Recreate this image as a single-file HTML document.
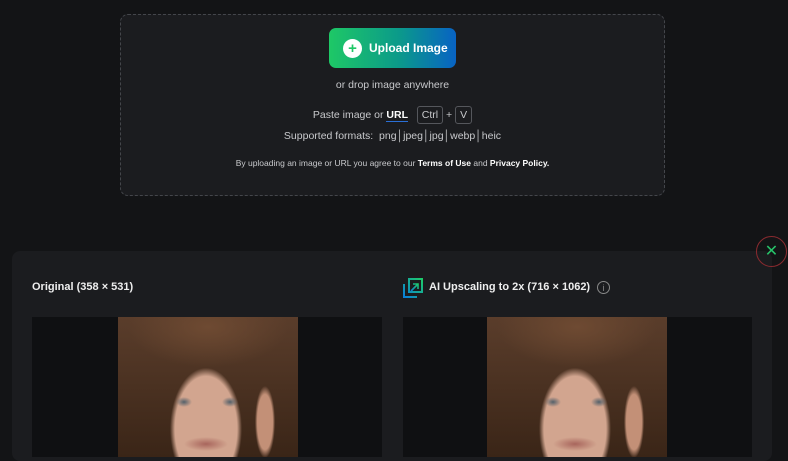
<!DOCTYPE html>
<html><head><style>
*{margin:0;padding:0;box-sizing:border-box}
body{width:788px;height:450px;overflow:hidden;background:#131416;font-family:"Liberation Sans",sans-serif;color:#ddd;position:relative}
.box{position:absolute;left:120px;top:14px;width:545px;height:182px;background:#1b1c1f;border:1px dashed #44464b;border-radius:8px}
.btn{position:absolute;left:208px;top:13px;width:127px;height:40px;border-radius:7px;background:linear-gradient(90deg,#1ec866,#0b9a8a 55%,#0863c4);color:#fff;font-weight:bold;font-size:12px}
.btn .pl{position:absolute;left:14px;top:11px;width:19px;height:19px;border-radius:50%;background:#fff;color:#1ec866;font-size:15px;line-height:19px;text-align:center;font-weight:bold}
.btn span.t{position:absolute;left:40px;top:13px}
.c{position:absolute;left:0;width:100%;text-align:center;font-size:10.5px;color:#c8c9cc}
.kbd{display:inline-block;border:1px solid #55575c;border-radius:3px;padding:2px 4px;font-size:10.5px;line-height:12px}
.panel{position:absolute;left:12px;top:251px;width:760px;height:210px;background:#1b1c1f;border-radius:8px}
.h{position:absolute;top:281px;font-size:11px;font-weight:bold;color:#eee}
.frame{position:absolute;top:317px;height:140px;background:#0f1012}
.photo{position:absolute;top:317px;width:180px;height:140px;background:
radial-gradient(ellipse 22px 7px at 88px 127px,#a8655c,transparent),
radial-gradient(ellipse 8px 5px at 66px 85px,#52606a,transparent),
radial-gradient(ellipse 8px 5px at 112px 85px,#52606a,transparent),
radial-gradient(ellipse 50px 85px at 88px 112px,#d2a58f 62%,transparent 72%),
radial-gradient(ellipse 14px 50px at 147px 105px,#c39077 55%,transparent 72%),
radial-gradient(ellipse 80px 40px at 90px 10px,#6e4a32,transparent),
linear-gradient(#5a3d2b,#3a2517)}
.x{position:absolute;left:756px;top:236px;width:31px;height:31px;border-radius:50%;border:1px solid #8a2a2f;color:#27c46a;text-align:center;line-height:29px;font-size:16px}
</style></head><body>
<div class="box">
<div class="btn"><div class="pl">+</div><span class="t">Upload Image</span></div>
<div class="c" style="top:64px">or drop image anywhere</div>
<div class="c" style="top:91px">Paste image or <b style="color:#fff;border-bottom:1px solid #2a6fd6">URL</b> &nbsp;&nbsp;<span class="kbd">Ctrl</span> + <span class="kbd">V</span></div>
<div class="c" style="top:115px">Supported formats: &nbsp;png│jpeg│jpg│webp│heic</div>
<div class="c" style="top:143px;font-size:8.5px">By uploading an image or URL you agree to our <b style="color:#fff">Terms of Use</b> and <b style="color:#fff">Privacy Policy.</b></div>
</div>
<div class="panel"></div>
<div class="x">✕</div>
<div class="h" style="left:32px">Original (358 × 531)</div>
<svg style="position:absolute;left:402px;top:277px" width="22" height="22" viewBox="0 0 22 22"><defs><linearGradient id="g" x1="0" y1="1" x2="1" y2="0"><stop offset="0" stop-color="#0a7fd8"/><stop offset="1" stop-color="#1ecb6a"/></linearGradient></defs><path d="M2 7v13h13M7 2h13v13h-13z" fill="none" stroke="url(#g)" stroke-width="2"/><path d="M9 14l7-7M11 7h5v5" fill="none" stroke="url(#g)" stroke-width="1.6"/></svg>
<div class="h" style="left:429px">AI Upscaling to 2x (716 × 1062)</div>
<div style="position:absolute;left:597px;top:281px;width:13px;height:13px;border:1px solid #888;border-radius:50%;font-size:9px;color:#888;text-align:center;line-height:12px">i</div>
<div class="frame" style="left:32px;width:350px"></div>
<div class="frame" style="left:403px;width:349px"></div>
<div class="photo" style="left:118px"></div>
<div class="photo" style="left:487px"></div>
</body></html>
